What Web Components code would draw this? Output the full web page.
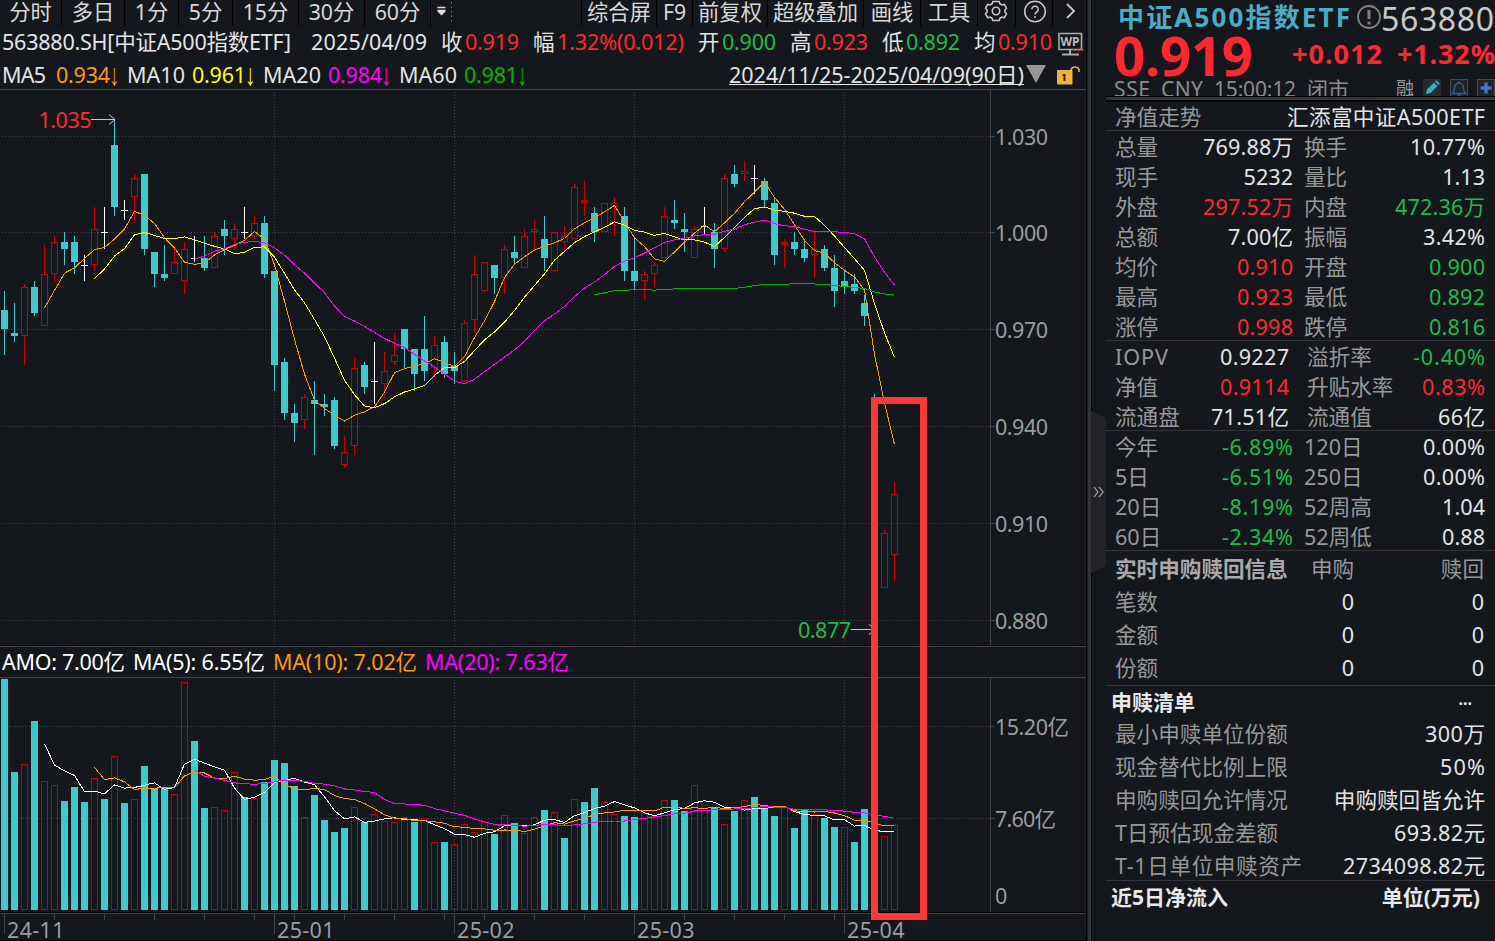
<!DOCTYPE html>
<html lang="zh-CN">
<head>
<meta charset="UTF-8">
<title>563880.SH</title>
<style>
  body {
    margin: 0;
    background: #14171c;
    overflow: hidden;
  }
</style>
</head>
<body>
<trade-app></trade-app>

<script>
const RED = '#ff2832';
const GREEN = '#1abc4b';
const TEAL = '#3acccc';
const BAR_RED = '#c80000';

// [kind, high, top, bottom, low, volume kind, volume top]; u = up, d = down, x = flat
const BARS = [
  ['d',291,310,329,355,'d',679],['d',303,333,336,342,'d',772],['u',284,287,336,365,'u',764],['d',281,287,313,316,'d',721],
  ['u',245,274,326,326,'u',781],['u',236,242,274,281,'u',785],['d',232,242,249,265,'d',801],['d',236,242,262,274,'d',787],
  ['x',255,265,265,281,'d',802],['u',207,229,265,271,'u',778],['x',207,232,232,249,'d',799],['d',119,145,207,216,'u',756],
  ['x',200,210,210,220,'d',803],['u',174,178,197,223,'u',799],['d',174,174,249,255,'d',766],['d',252,252,274,287,'d',788],
  ['d',245,274,278,281,'d',788],['u',245,262,274,274,'u',794],['u',242,249,281,294,'u',682],['x',236,258,258,262,'d',741],
  ['d',236,258,268,271,'d',808],['u',232,236,268,268,'u',807],['d',220,229,236,255,'u',810],['u',223,229,239,249,'u',772],
  ['x',207,232,232,239,'d',797],['u',216,223,236,239,'u',798],['d',216,223,274,278,'d',782],['d',271,271,365,391,'d',760],
  ['d',358,362,413,420,'d',763],['d',404,413,423,442,'d',786],['u',394,397,420,429,'u',817],['d',381,400,404,455,'d',795],
  ['d',394,404,407,416,'d',820],['d',397,400,446,449,'d',832],['u',436,452,465,468,'d',828],['u',358,368,446,455,'u',807],
  ['d',362,365,387,394,'d',822],['x',342,381,381,404,'u',814],['u',352,371,384,397,'u',821],['u',333,355,362,365,'u',822],
  ['d',329,329,349,368,'u',817],['d',349,349,374,391,'d',822],['d',316,349,371,381,'u',818],['u',336,345,368,378,'u',842],
  ['d',336,342,374,378,'d',842],['d',352,366,371,384,'u',844],['u',320,323,381,381,'u',824],['u',255,274,320,333,'u',832],
  ['u',262,262,291,291,'u',822],['d',265,265,278,294,'d',834],['u',245,249,278,294,'u',815],['d',236,252,258,265,'d',823],
  ['u',229,236,268,268,'u',833],['u',220,229,232,251,'u',817],['d',216,239,258,271,'d',810],['u',232,232,271,271,'u',812],
  ['u',226,236,242,252,'d',838],['u',184,187,239,239,'u',799],['u',181,200,203,216,'d',802],['d',207,213,232,242,'d',788],
  ['u',203,203,232,232,'u',802],['u',197,203,207,236,'u',814],['d',207,216,271,281,'d',816],['d',238,271,281,290,'d',817],
  ['u',271,274,281,300,'u',813],['u',262,265,274,287,'u',816],['u',207,216,258,258,'u',800],['d',200,220,223,229,'d',800],
  ['d',213,229,232,252,'d',811],['u',226,229,258,258,'u',785],['x',207,226,226,235,'u',805],['d',223,232,249,268,'d',808],
  ['u',174,178,249,252,'u',824],['d',165,174,184,187,'d',811],['u',161,171,174,181,'u',800],['x',165,178,178,194,'d',797],
  ['d',178,181,200,208,'d',808],['d',197,203,255,265,'d',816],['u',239,242,245,268,'u',807],['d',232,242,249,255,'d',828],
  ['d',239,249,258,262,'d',810],['u',229,249,255,278,'u',814],['d',245,249,268,271,'d',818],['d',255,268,291,307,'d',827],
  ['d',271,281,287,294,'u',827],['d',274,284,291,294,'d',842],['d',295,303,316,326,'d',809],['d',394,400,589,629,'d',843],
  ['u',529,533,588,588,'u',836],['u',481,494,555,581,'u',825]
];

const closes = BARS.map(b => b[0] === 'd' ? b[3] - 1 : b[2]);
const volumes = BARS.map(b => b[6]);

function average(values, n, color) {
  const pts = [];
  for (let i = n - 1; i < values.length; i++) {
    let sum = 0;
    for (let j = i - n + 1; j <= i; j++) sum += values[j];
    pts.push(`${i * 10 + 4.5},${(sum / n + 0.5).toFixed(1)}`);
  }
  return `<polyline points="${pts.join(' ')}" fill="none" stroke="${color}"/>`;
}

function box(kind, x, top, bottom) {
  if (kind === 'd') return `<rect x="${x}" y="${top}" width="7" height="${bottom - top}" fill="${TEAL}"/>`;
  return `<rect x="${x + .5}" y="${top + .5}" width="6" height="${bottom - top - 1}" fill="none" stroke="${BAR_RED}"/>`;
}

function vline(x, y1, y2, color, extra = '') {
  return `<line x1="${x + .5}" x2="${x + .5}" y1="${y1}" y2="${y2}" stroke="${color}" ${extra}/>`;
}

function hline(y, x1, x2, color, extra = '') {
  return `<line y1="${y + .5}" y2="${y + .5}" x1="${x1}" x2="${x2}" stroke="${color}" ${extra}/>`;
}

const DOTS = 'stroke-dasharray="1 2"';
const GRID = '#414347';
const MONTHS = [274, 454, 634, 844];

// Text squeezed or stretched to a given width by its letter spacing
class FitText extends HTMLElement {
  connectedCallback() {
    this.attachShadow({ mode: 'open' }).innerHTML = `
      <style>
        :host { display: inline-block; white-space: nowrap; flex: none; }
        span { display: inline-block; }
      </style>
      <span><slot></slot></span>`;
    const w = Number(this.getAttribute('w'));
    if (!w) return;
    const span = this.shadowRoot.querySelector('span');
    const gap = (w - span.getBoundingClientRect().width) / (this.textContent.length - 1);
    span.style.letterSpacing = gap.toFixed(3) + 'px';
    this.style.width = w + 'px';
  }
}

class ToolBar extends HTMLElement {
  connectedCallback() {
    const cells = [['分时', 62], ['多日', 63], ['1分', 54], ['5分', 54], ['15分', 66], ['30分', 66], ['60分', 66]];
    const tools = [['综合屏', 75], ['F9', 36], ['前复权', 75], ['超级叠加', 96], ['画线', 57], ['工具', 57]];
    const cell = ([t, w]) => `<div style="width:${w}px">${t}</div>`;
    this.attachShadow({ mode: 'open' }).innerHTML = `
      <style>
        :host { display: flex; height: 26px; line-height: 24px; font-size: 21.3px; color: #d8d8d8; }
        div { box-sizing: border-box; border-right: 1px solid #000; text-align: center; flex: none; white-space: nowrap; }
        .more { flex: 1; text-align: left; }
        svg { display: block; }
      </style>
      ${cells.map(cell).join('')}
      <div class="more"><svg width="24" height="26">
        <path d="M6.500 7.500h8M6.500 10.500h8" stroke="#ddd" stroke-width="1.500"/><path d="M6 11h9l-4.500 4.500z" fill="#ddd"/>
        <path d="M20.500 2v22" stroke="#777" stroke-dasharray="1.500 3"/></svg></div>
      ${tools.map(cell).join('')}
      <div style="width:38px"><svg width="36" height="26" fill="none" stroke="#c8c8c8" stroke-width="1.600" stroke-linejoin="round">
        <circle cx="18" cy="11" r="3.700"/>
        <path d="M14.800 1.500h6.400l.7 2.300 1.900 1.100 2.400-.7 2.400 4.100-1.700 1.700v2l1.700 1.700-2.400 4.100-2.400-.7-1.900 1.100-.7 2.300h-6.400l-.7-2.300-1.900-1.100-2.400.7-2.400-4.100 1.700-1.700v-2l-1.700-1.700 2.400-4.100 2.400.7 1.900-1.100z"/></svg></div>
      <div style="width:37px"><svg width="34" height="26" fill="none" stroke="#c8c8c8" stroke-width="1.500">
        <circle cx="19" cy="11.500" r="10.300"/><path d="M15.800 9.300a3.200 3.200 0 1 1 4.900 2.700q-1.700 1-1.700 2.600"/><path d="M19 16v2"/></svg></div>
      <div style="width:35px"><svg width="32" height="26" fill="none" stroke="#c8c8c8" stroke-width="1.800"><path d="M14 4l7 7-7 7"/></svg></div>`;
  }
}

class QuoteLine extends HTMLElement {
  connectedCallback() {
    const pairs = [
      ['收', '0.919', 14, 54, RED], ['幅', '1.32%(0.012)', 14, 127, RED], ['开', '0.900', 14, 54, GREEN],
      ['高', '0.923', 14, 54, RED], ['低', '0.892', 14, 54, GREEN], ['均', '0.910', 14, 54, RED]
    ];
    this.attachShadow({ mode: 'open' }).innerHTML = `
      <style>
        :host { display: flex; height: 34px; line-height: 32px; font-size: 21.5px; color: #e4e4e4; }
        fit-text, b { flex: none; }
        b { font-weight: inherit; width: 24px; }
        .icon { position: relative; margin-left: 5px; width: 28px; }
        svg { display: block; }
        i { position: absolute; left: 15px; top: 3px; font-style: normal; color: ${RED}; font-size: 15px; }
      </style>
      <fit-text w="289" style="margin-left:2px">563880.SH[中证A500指数ETF]</fit-text>
      <fit-text w="116" style="margin-left:20px">2025/04/09</fit-text>
      ${pairs.map(([k, v, gap, w, c]) => `<b style="margin-left:${gap}px">${k}</b><fit-text w="${w}" style="color:${c}">${v}</fit-text>`).join('')}
      <div class="icon"><svg width="28" height="34" viewBox="0 0 28 34">
        <path d="M2 7.500h22.500v16h-22.500z" fill="none" stroke="#aaa" stroke-width="1.600"/>
        <path d="M13 24v4M5 28.500h17" stroke="#aaa" stroke-width="2"/>
        <text x="13" y="20" text-anchor="middle" font-size="12" font-weight="700" fill="#bbb">WP</text></svg><i>...</i></div>`;
  }
}

class AverageLine extends HTMLElement {
  connectedCallback() {
    const list = [['MA5', 44, 54, '0.934', '#ff9900'], ['MA10', 58, 65, '0.961', '#ffff00'],
      ['MA20', 58, 65, '0.984', '#ff00ff'], ['MA60', 58, 65, '0.981', '#00b400']];
    this.attachShadow({ mode: 'open' }).innerHTML = `
      <style>
        :host { display: flex; height: 29px; line-height: 29px; font-size: 21.5px; color: #e4e4e4; padding-left: 2px; }
        .group { display: flex; flex: none; }
        .name { flex: none; }
        .arrow { width: 18px; font-family: "Liberation Sans", sans-serif; font-size: 21px; transform: scaleY(1.450); margin-left: -1px; }
        .range { margin-left: auto; height: 24px; border-bottom: 1px solid #e4e4e4; }
        svg { display: block; flex: none; }
      </style>
      ${list.map(([n, w, col, v, c]) => `<div class="group"><div class="name" style="width:${col}px"><fit-text w="${w}">${n}</fit-text></div>
        <fit-text w="54" style="color:${c}">${v}</fit-text><span class="arrow" style="color:${c}">↓</span></div>`).join('')}
      <fit-text class="range" w="295">2024/11/25-2025/04/09(90日)</fit-text>
      <svg width="64" height="29"><path d="M2 5h20l-10 18z" fill="#969696"/>
        <path d="M47 12V9.500a4.500 4.500 0 0 1 8 0V12" fill="none" stroke="#f0b43c" stroke-width="1.600"/>
        <rect x="33" y="10" width="15.500" height="14.500" rx="1" fill="#f0b43c"/><path d="M38.500 15h3M40.500 14.500v6.500" stroke="#3c2800" stroke-width="2" fill="none"/></svg>`;
  }
}

class PriceChart extends HTMLElement {
  connectedCallback() {
    const levels = [['1.030', 136], ['1.000', 232], ['0.970', 329], ['0.940', 426], ['0.910', 523], ['0.880', 620]];
    const candles = BARS.map(([kind, high, top, bottom, low], i) => {
      const x = i * 10 + 1;
      if (kind === 'x') return vline(x + 3, high, low, '#fff') + hline(top, x, x + 7, '#fff');
      const c = kind === 'd' ? TEAL : BAR_RED;
      return vline(x + 3, high, top, c) + vline(x + 3, bottom, low, c) + box(kind, x, top, bottom);
    }).join('');
    this.attachShadow({ mode: 'open' }).innerHTML = `
      <style>
        :host { display: block; height: 556px; }
        svg { display: block; }
        text { font-size: 21.5px; fill: #9c9c9c; }
      </style>
      <svg width="1087" height="556" viewBox="0 89 1087 556">
        <g shape-rendering="crispEdges">
          ${hline(89, 0, 1087, GRID)}
          ${levels.map(l => hline(l[1], 2, 990, GRID, DOTS) + hline(l[1], 990, 995, GRID)).join('')}
          ${MONTHS.map(x => vline(x, 92, 645, GRID, DOTS)).join('')}
          ${vline(990, 90, 645, GRID)}
          ${candles}
          ${average(closes, 5, '#ff9900')}${average(closes, 10, '#ffff00')}${average(closes, 20, '#ff00ff')}${average(closes, 60, '#00b400')}
        </g>
        ${levels.map(l => `<text x="995" y="${l[1] + 8.5}" textLength="53">${l[0]}</text>`).join('')}
        <text x="38.500" y="127.500" textLength="53" style="fill:${RED}">1.035</text>
        <path d="M91 119.500h24M109 114.500l6 5-6 5" fill="none" stroke="#c8c8c8"/>
        <text x="798" y="637.500" textLength="53" style="fill:${GREEN}">0.877</text>
        <path d="M851 629.500h24M869 624.500l6 5-6 5" fill="none" stroke="#c8c8c8"/>
      </svg>`;
  }
}

class AmountLine extends HTMLElement {
  connectedCallback() {
    this.attachShadow({ mode: 'open' }).innerHTML = `
      <style>
        :host { display: flex; box-sizing: border-box; height: 33px; border-top: 1px solid #000; border-bottom: 1px solid #414347;
          box-shadow: inset 0 1px #414347; line-height: 31px; font-size: 21.5px; color: #fff; padding-left: 2px; gap: 8px; }
      </style>
      <fit-text w="123">AMO: 7.00亿</fit-text>
      <fit-text w="132">MA(5): 6.55亿</fit-text>
      <fit-text w="144" style="color:#ff9900">MA(10): 7.02亿</fit-text>
      <fit-text w="144" style="color:#ff00ff">MA(20): 7.63亿</fit-text>`;
  }
}

class VolumeChart extends HTMLElement {
  connectedCallback() {
    this.attachShadow({ mode: 'open' }).innerHTML = `
      <style>
        :host { display: block; height: 234px; }
        svg { display: block; }
        text { font-size: 21.5px; fill: #9c9c9c; }
      </style>
      <svg width="1087" height="234" viewBox="0 678 1087 234">
        <g shape-rendering="crispEdges">
          ${[726, 818].map(y => hline(y, 2, 990, GRID, DOTS) + hline(y, 990, 995, GRID)).join('')}
          ${MONTHS.map(x => vline(x, 680, 912, GRID, DOTS)).join('')}
          ${vline(990, 678, 912, GRID)}
          ${BARS.map((b, i) => box(b[5], i * 10 + 1, b[6], 910)).join('')}
          ${average(volumes, 5, '#fff')}${average(volumes, 10, '#ff9900')}${average(volumes, 20, '#ff00ff')}
        </g>
        <text x="995" y="734.500" textLength="74">15.20亿</text>
        <text x="995" y="826.500" textLength="61">7.60亿</text>
        <text x="995" y="904">0</text>
      </svg>`;
  }
}

class TimeAxis extends HTMLElement {
  connectedCallback() {
    const ticks = [54, 104, 154, 204, 254, 294, 344, 394, 444, 484, 534, 584, 684, 734, 784, 834];
    const labels = [[4, '24-11'], [274, '25-01'], [454, '25-02'], [634, '25-03'], [844, '25-04']];
    this.attachShadow({ mode: 'open' }).innerHTML = `
      <style>
        :host { display: block; height: 29px; }
        svg { display: block; }
        text { font-size: 21.5px; fill: #9c9c9c; }
      </style>
      <svg width="1088" height="29" viewBox="0 912 1088 29">
        <g shape-rendering="crispEdges">
          ${hline(912, 0, 1087, '#000')}${hline(913, 0, 1088, GRID)}${hline(940, 0, 1088, '#000')}
          ${ticks.map(x => vline(x, 914, 920, GRID)).join('')}
          ${labels.map(l => vline(l[0], 914, 934, GRID)).join('')}
        </g>
        ${labels.map(l => `<text x="${l[0] + 3}" y="937.500" textLength="57.500">${l[1]}</text>`).join('')}
      </svg>`;
  }
}

class SideHeader extends HTMLElement {
  connectedCallback() {
    this.attachShadow({ mode: 'open' }).innerHTML = `
      <style>
        :host { display: block; height: 102px; overflow: hidden; }
        div { display: flex; }
        .name { height: 36px; line-height: 35px; font-size: 26px; font-weight: 700; color: #4bacc6; padding-left: 12px; }
        .code { font-size: 32px; font-weight: 400; color: #c8c8c8; line-height: 37px; }
        .price { height: 40px; line-height: 36px; font-weight: 700; color: ${RED}; font-size: 27px; padding-left: 8px; }
        .big { font-size: 54.500px; line-height: 38px; }
        .status { height: 20px; line-height: 27.500px; overflow: hidden; font-size: 21px; color: #8c8c8c; padding-left: 8px; }
        .rule { height: 3px; background: #333338; border-top: 1px solid #000; border-bottom: 2px solid #000; }
        svg { display: block; flex: none; }
      </style>
      <div class="name">
        <fit-text w="232">中证A500指数ETF</fit-text>
        <svg width="31" height="36" fill="none" stroke="#808080"><circle cx="19" cy="17" r="11" stroke-width="1.800"/><path d="M19 10v9M19 21.500v3" stroke-width="3"/></svg>
        <fit-text class="code" w="113">563880</fit-text>
      </div>
      <div class="price">
        <fit-text class="big" w="139">0.919</fit-text>
        <fit-text w="90" style="margin-left:39px">+0.012</fit-text>
        <fit-text w="98" style="margin-left:15px">+1.32%</fit-text>
      </div>
      <div class="status">
        <fit-text w="36">SSE</fit-text>
        <fit-text w="42" style="margin-left:11px">CNY</fit-text>
        <fit-text w="82" style="margin-left:11px">15:00:12</fit-text>
        <fit-text w="42" style="margin-left:11px">闭市</fit-text>
        <span style="margin-left:47px;font-size:18px;color:#999;line-height:25px">融</span>
        <svg width="80" height="20" style="margin-left:7px">
          <rect x="2" y="3" width="18" height="18" fill="#2a2b30"/>
          <path d="M5 18l1-4.500 7-7 3.500 3.500-7 7z" fill="#32b4c8"/><path d="M14 5.500l1.500-1.200 3.200 3.200-1.200 1.500z" fill="#32b4c8"/>
          <rect x="29.500" y="3.500" width="17" height="17" fill="#202226" stroke="#4a4a4e"/>
          <path d="M31.500 17.500q2-2 2-5.500a4.500 5 0 0 1 9 0q0 3.500 2 5.500zM36.500 19h3M38 5v2" fill="none" stroke="#2f5f9e" stroke-width="1.400"/>
          <rect x="56.500" y="3.500" width="17" height="17" fill="#202226" stroke="#4a4a4e"/>
          <path d="M65 6.500v11M59.500 12h11" stroke="#3c78c8" stroke-width="3.500"/></svg>
      </div>
      <div class="rule"></div>`;
  }
}

// One line of the side panel: label and value, and a second pair if it has one
class QuoteRow extends HTMLElement {
  connectedCallback() {
    const tones = { r: RED, g: GREEN };
    const get = name => this.getAttribute(name) || '';
    const value = (name, tone, w) => `<span class="value" style="color:${tones[get(tone)] || '#e4e4e4'}"><fit-text w="${get(w)}">${get(name)}</fit-text></span>`;
    const two = this.hasAttribute('k2');
    this.attachShadow({ mode: 'open' }).innerHTML = `
      <style>
        :host { display: grid; grid-template-columns: ${two ? '178px 192px' : '370px'}; padding-left: 9px; height: 30px; line-height: 30px; color: #989898; }
        :host([tall]) { height: 33px; line-height: 31px; }
        .pair { display: flex; justify-content: space-between; white-space: nowrap; }
        .second { padding-left: ${get('inset') || 11}px; }
        .first { padding-right: ${get('pull') || 0}px; }
      </style>
      <div class="pair first"><fit-text w="${get('lw')}">${get('k')}</fit-text>${value('v', 't', 'w')}</div>
      ${two ? `<div class="pair second"><fit-text>${get('k2')}</fit-text>${value('v2', 't2', 'w2')}</div>` : ''}`;
  }
}

class SidePanel extends HTMLElement {
  connectedCallback() {
    const rows = list => list.map(([k, v, t, k2, v2, t2, extra = '']) =>
      `<quote-row k="${k}" v="${v}" t="${t}" k2="${k2}" v2="${v2}" t2="${t2}" ${extra}></quote-row>`).join('');
    this.attachShadow({ mode: 'open' }).innerHTML = `
      <style>
        :host { display: block; width: 389px; font-size: 21.6px; color: #989898; overflow: hidden; }
        section { border-bottom: 1px solid #333338; box-sizing: border-box; }
        header { display: flex; justify-content: space-between; font-weight: 700; color: #e8e8e8; padding: 0 15px 0 5px; line-height: 32px; height: 32px; font-size: 21px; }
        .flow { display: grid; grid-template-columns: 196px 43px 1fr; padding: 0 11px 0 9px; line-height: 33px; }
        .flow > * { white-space: nowrap; }
        .flow span { text-align: right; }
        .flow b { color: #a8a8a8; }
        .n { color: #e4e4e4; }
      </style>
      <side-header></side-header>
      <section style="height:29px"><quote-row k="净值走势" v="汇添富中证A500ETF" w="198"></quote-row></section>
      <section style="height:210px;padding-top:1px">${rows([
        ['总量', '769.88万', '', '换手', '10.77%', '', 'w="90" w2="75"'],
        ['现手', '5232', '', '量比', '1.13', ''],
        ['外盘', '297.52万', 'r', '内盘', '472.36万', 'g', 'w="90" w2="90"'],
        ['总额', '7.00亿', '', '振幅', '3.42%', '', 'w="65" w2="62"'],
        ['均价', '0.910', 'r', '开盘', '0.900', 'g', 'w="56" w2="56"'],
        ['最高', '0.923', 'r', '最低', '0.892', 'g', 'w="56" w2="56"'],
        ['涨停', '0.998', 'r', '跌停', '0.816', 'g', 'w="56" w2="56"']])}</section>
      <section style="height:90px;padding-top:1px">${rows([
        ['IOPV', '0.9227', '', '溢折率', '-0.40%', 'g', 'w="69" w2="72" pull="4" inset="14" lw="53"'],
        ['净值', '0.9114', 'r', '升贴水率', '0.83%', 'r', 'w="69" w2="63" pull="4" inset="14"'],
        ['流通盘', '71.51亿', '', '流通值', '66亿', '', 'w="78" w2="47" pull="4" inset="14"']])}</section>
      <section style="height:120px;padding-top:1px">${rows([
        ['今年', '-6.89%', 'g', '120日', '0.00%', '', 'w="71" w2="62"'],
        ['5日', '-6.51%', 'g', '250日', '0.00%', '', 'w="71" w2="62"'],
        ['20日', '-8.19%', 'g', '52周高', '1.04', '', 'w="71" w2="43"'],
        ['60日', '-2.34%', 'g', '52周低', '0.88', '', 'w="71" w2="43"']])}</section>
      <section style="height:135px;padding-top:1px">
        <div class="flow">
          <b>实时申购赎回信息</b><span>申购</span><span>赎回</span>
          ${['笔数', '金额', '份额'].map(k => `<div>${k}</div><span class="n">0</span><span class="n">0</span>`).join('')}
        </div>
      </section>
      <section style="height:195px">
        <header style="padding-right:23px"><span>申赎清单</span><span style="font-size:16px;line-height:27px">...</span></header>
        <quote-row tall k="最小申赎单位份额" v="300万" w="60"></quote-row>
        <quote-row tall k="现金替代比例上限" v="50%" w="45"></quote-row>
        <quote-row tall k="申购赎回允许情况" v="申购赎回皆允许"></quote-row>
        <quote-row tall k="T日预估现金差额" v="693.82元" w="91"></quote-row>
        <quote-row tall k="T-1日单位申赎资产" v="2734098.82元" w="142" lw="187"></quote-row>
      </section>
      <header style="line-height:33px"><span>近5日净流入</span><span>单位(万元)</span></header>`;
  }
}

class TradeApp extends HTMLElement {
  connectedCallback() {
    this.attachShadow({ mode: 'open' }).innerHTML = `
      <style>
        :host { display: flex; position: relative; width: 1495px; height: 941px; overflow: hidden; background: #14171c;
          font-family: "Noto Sans", "Noto Sans CJK SC", sans-serif; }
        main { width: 1088px; flex: none; box-sizing: border-box; }
        .split { width: 3px; background: #333338; flex: none; box-shadow: -1px 0 #14171c, -2px 0 #000, 1px 0 #000; }
        .handle { width: 15px; flex: none; padding-top: 411px; }
        .mark { position: absolute; left: 871px; top: 397px; width: 42px; height: 509px; border: 7px solid #fc3838; }
        svg { display: block; }
      </style>
      <main>
        <tool-bar></tool-bar>
        <quote-line></quote-line>
        <average-line></average-line>
        <price-chart></price-chart>
        <amount-line></amount-line>
        <volume-chart></volume-chart>
        <time-axis></time-axis>
      </main>
      <div class="split"></div>
      <div class="handle"><svg width="15" height="162"><path d="M0 0l15 7v148l-15 7z" fill="#232228"/>
        <path d="M3 76l4 5-4 5M8 76l4 5-4 5" fill="none" stroke="#aaa" stroke-width="1.200"/></svg></div>
      <side-panel></side-panel>
      <div class="mark"></div>`;
  }
}

customElements.define('fit-text', FitText);
customElements.define('tool-bar', ToolBar);
customElements.define('quote-line', QuoteLine);
customElements.define('average-line', AverageLine);
customElements.define('price-chart', PriceChart);
customElements.define('amount-line', AmountLine);
customElements.define('volume-chart', VolumeChart);
customElements.define('time-axis', TimeAxis);
customElements.define('side-header', SideHeader);
customElements.define('quote-row', QuoteRow);
customElements.define('side-panel', SidePanel);
customElements.define('trade-app', TradeApp);
</script>
</body>
</html>
